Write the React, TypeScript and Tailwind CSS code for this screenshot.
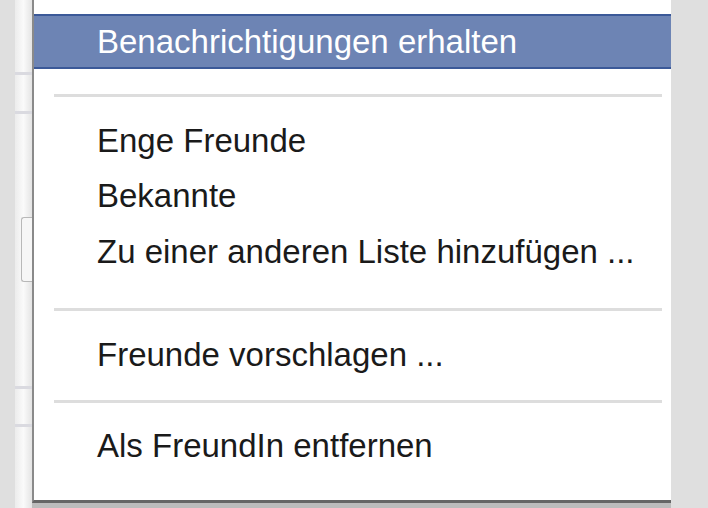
import React from "react";

function Item({ children, h = "h-[55px] leading-[55px]" }: { children: React.ReactNode; h?: string }) {
  return <div className={`${h} pl-[63px] text-[33px] text-[#1a1a1a] whitespace-nowrap`}>{children}</div>;
}

function Sep({ mt, mb }: { mt: string; mb: string }) {
  return <div className={`${mt} ${mb} ml-[20px] mr-[9px] h-[3px] bg-[#dddddd]`} />;
}

export default function App() {
  return (
    <div className="flex h-[508px] w-[708px] overflow-hidden bg-[#dfdfdf] font-['Liberation_Sans',Arial,sans-serif]">
      <div className="w-[15px] shrink-0" />
      <div className="flex w-[17px] shrink-0 flex-col bg-gradient-to-r from-[#ececec] via-[#fafafa] to-[#e4e4e4]">
        <div className="h-[72px]" />
        <div className="h-[3px] bg-[#dadae0]" />
        <div className="h-[36px]" />
        <div className="h-[3px] bg-[#dadae0]" />
        <div className="h-[103px]" />
        <div className="ml-[6px] h-[65px] rounded-l-[3px] border border-r-0 border-[#b8b8b8] bg-[#f6f6f6]" />
        <div className="h-[104px]" />
        <div className="h-[3px] bg-[#dadae0]" />
        <div className="h-[35px]" />
        <div className="h-[3px] bg-[#dadae0]" />
      </div>
      <div className="flex w-[639px] shrink-0 flex-col">
        <div className="flex h-[503px] flex-col border-b-[3px] border-l-2 border-b-[#666666] border-l-[#8a8a8a] bg-white pt-[14px]">
          <div className="h-[55px] border-y-2 border-[#3b5998] bg-[#6d84b4] pl-[63px] text-[33px] leading-[51px] text-white whitespace-nowrap">
            Benachrichtigungen erhalten
          </div>
          <Sep mt="mt-[25px]" mb="mb-[16px]" />
          <Item>Enge Freunde</Item>
          <Item>Bekannte</Item>
          <Item h="h-[56px] leading-[57px]">Zu einer anderen Liste hinzufügen ...</Item>
          <Sep mt="mt-[29px]" mb="mb-[16px]" />
          <Item>Freunde vorschlagen ...</Item>
          <Sep mt="mt-[18px]" mb="mb-[15px]" />
          <Item>Als FreundIn entfernen</Item>
        </div>
        <div className="h-[5px] bg-[#bcbcbc]" />
      </div>
      <div className="flex-1" />
    </div>
  );
}
